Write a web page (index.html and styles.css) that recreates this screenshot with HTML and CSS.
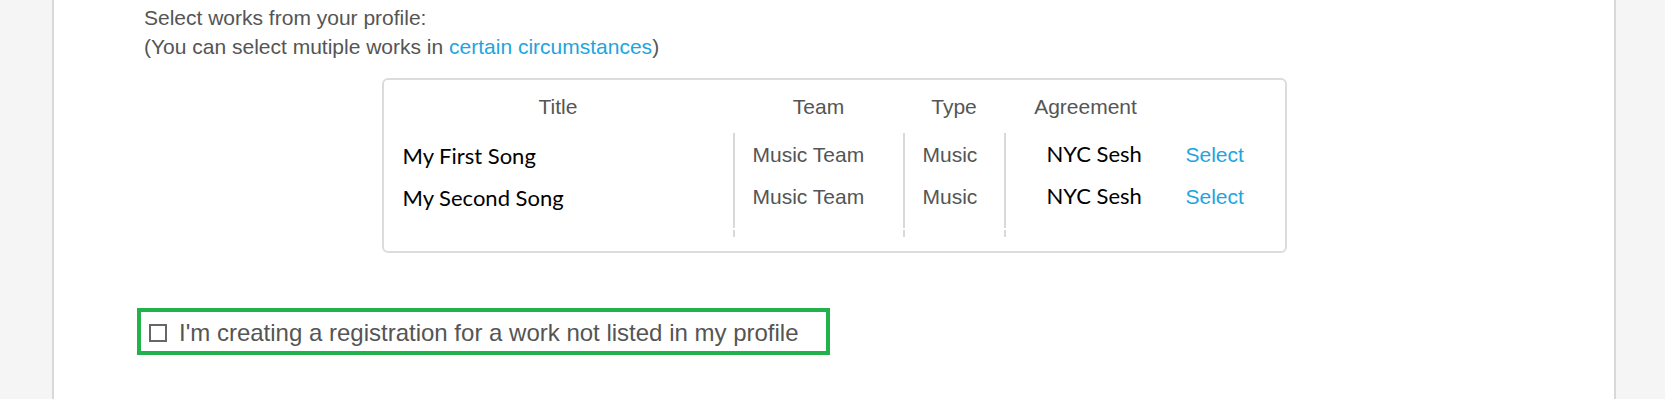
FILE: index.html
```html
<html>
<head>
<link rel="stylesheet" href="styles.css">
</head>
<body>
<div class="page">
  <div class="intro">
    <p>Select works from your profile:</p>
    <p>(You can select mutiple works in <a href="#">certain circumstances</a>)</p>
  </div>

  <div class="works">
    <table class="works-table">
      <colgroup>
        <col class="col-title">
        <col class="col-team">
        <col class="col-type">
        <col class="col-agreement">
        <col class="col-action">
      </colgroup>
      <thead>
        <tr><th>Title</th><th class="sep">Team</th><th class="sep">Type</th><th class="sep">Agreement</th><th></th></tr>
      </thead>
      <tbody>
        <tr class="row-first">
          <td class="title">My First Song</td>
          <td class="sep team">Music Team</td>
          <td class="sep type">Music</td>
          <td class="sep agreement">NYC Sesh</td>
          <td class="action"><a href="#">Select</a></td>
        </tr>
        <tr class="row-last">
          <td class="title">My Second Song</td>
          <td class="sep team">Music Team</td>
          <td class="sep type">Music</td>
          <td class="sep agreement">NYC Sesh</td>
          <td class="action"><a href="#">Select</a></td>
        </tr>
        <tr class="row-tail">
          <td></td><td class="tail"></td><td class="tail"></td><td class="tail"></td><td></td>
        </tr>
      </tbody>
    </table>
  </div>

  <label class="not-listed"><span class="check"></span>I'm creating a registration for a work not listed in my profile</label>
</div>
</body>
</html>
```

FILE: styles.css
```css
body {
  margin: 0;
  background-color: #f5f5f5;
  font-family: "Liberation Sans", Arial, sans-serif;
  color: #555555;
}

a {
  color: #1ea5de;
  text-decoration: none;
}

.page {
  box-sizing: border-box;
  min-height: 100vh;
  margin: 0 49px 0 52px;
  background-color: #ffffff;
  border-left: 2px solid #d8d8d8;
  border-right: 2px solid #d8d8d8;
}

.intro {
  padding: 3px 0 0 90px;
  font-size: 21px;
  line-height: 29px;
}
.intro p { margin: 0; }

/* works picker */
.works {
  box-sizing: border-box;
  width: 905px;
  margin: 17px auto 0;
  border: 2px solid #dcdcdc;
  border-radius: 6px;
  padding-bottom: 14px;
}

.works-table {
  width: 100%;
  table-layout: fixed;
  border-collapse: separate;
  border-spacing: 0;
  font-size: 21px;
  line-height: 24px;
}

.col-title { width: 349px; }
.col-team { width: 170px; }
.col-type { width: 101px; }
.col-agreement { width: 162px; }
.col-action { width: 119px; }

.works-table th {
  font-weight: normal;
  text-align: center;
  padding: 15px 0 14px;
}
.works-table th.sep { border-left: 2px solid transparent; }

.works-table td {
  vertical-align: top;
  text-align: left;
  padding: 10px 0 0 18px;
  white-space: nowrap;
}
.works-table td.sep { border-left: 2px solid #d9d9d9; }

.row-first { height: 42px; }
.row-last { height: 53px; }

.works-table td.title,
.works-table td.agreement {
  font-family: Lato, "Liberation Sans", sans-serif;
  font-size: 22px;
  color: #000000;
}
.works-table td.title { padding: 11px 0 0 19px; }
.works-table td.agreement { padding: 9px 0 0 41px; }
.works-table td.action { padding-left: 20px; }

.row-tail td { height: 9px; padding: 0; }
.works-table td.tail {
  background: linear-gradient(#d9d9d9, #d9d9d9) no-repeat 0 2px / 2px 7px;
}

/* manual entry option */
.not-listed {
  box-sizing: border-box;
  display: flex;
  align-items: center;
  width: 693px;
  margin: 55px 0 0 83px;
  padding: 7px 0 5px 8px;
  border: 4px solid #22b14c;
  font-size: 24px;
  line-height: 27px;
}

.check {
  flex: none;
  box-sizing: border-box;
  width: 18px;
  height: 18px;
  margin-right: 12px;
  border: 2px solid #666666;
}
```
